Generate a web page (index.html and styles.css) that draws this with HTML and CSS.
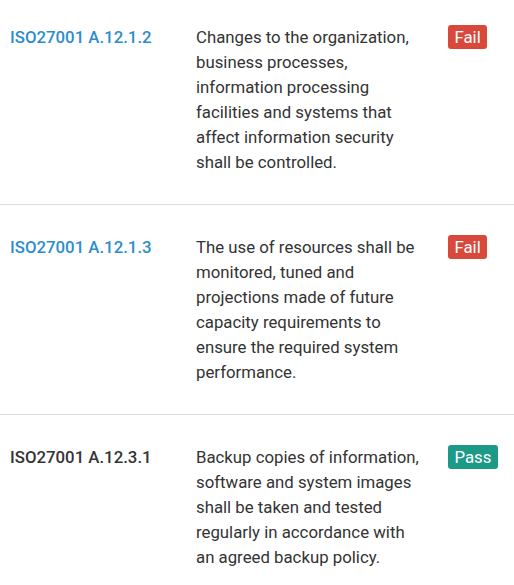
FILE: index.html
```html
<!DOCTYPE html>
<html>
<head>
<meta charset="utf-8">
<link rel="stylesheet" href="styles.css">
</head>
<body>
<table class="controls">
  <tr class="row">
    <td class="cid"><a class="link" href="#">ISO27001 A.12.1.2</a></td>
    <td class="desc">Changes to the organization, business processes, information processing facilities and systems that affect information security shall be controlled.</td>
    <td class="status"><span class="badge fail">Fail</span></td>
  </tr>
  <tr class="row">
    <td class="cid"><a class="link" href="#">ISO27001 A.12.1.3</a></td>
    <td class="desc">The use of resources shall be monitored, tuned and projections made of future capacity requirements to ensure the required system performance.</td>
    <td class="status"><span class="badge fail">Fail</span></td>
  </tr>
  <tr class="row">
    <td class="cid"><span class="plain">ISO27001 A.12.3.1</span></td>
    <td class="desc">Backup copies of information, software and system images shall be taken and tested regularly in accordance with an agreed backup policy.</td>
    <td class="status"><span class="badge pass">Pass</span></td>
  </tr>
</table>
</body>
</html>
```
FILE: styles.css
```css
html, body {
  margin: 0;
  padding: 0;
  background: #fff;
}
body {
  font-family: Roboto, "Liberation Sans", sans-serif;
  font-size: 16.8px;
  line-height: 25px;
  color: #333;
}
.controls {
  width: 514px;
  table-layout: fixed;
  border-collapse: collapse;
  margin-top: -5px;
}
.row td {
  box-sizing: border-box;
  padding: 30px 10px 29px;
  vertical-align: top;
  border-bottom: 1px solid #dcdcdc;
}
.cid {
  width: 186px;
  font-weight: 500;
}
.link {
  color: #2b8dcd;
  text-decoration: none;
}
.plain {
  color: #333;
}
.row .desc {
  width: 252px;
  padding-right: 18px;
}
.status {
  width: 76px;
}
.badge {
  display: inline-block;
  vertical-align: top;
  height: 24px;
  line-height: 24px;
  padding: 0 6.5px;
  border-radius: 3px;
  color: #fff;
  font-size: 16.8px;
}
.fail {
  background: #d9493b;
}
.pass {
  background: #1d9a87;
}
```
